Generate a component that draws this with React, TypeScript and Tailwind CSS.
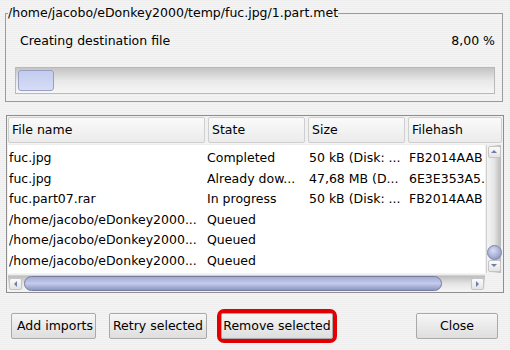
import React from 'react';

const rows = [
    { name: 'fuc.jpg', state: 'Completed', size: '50 kB (Disk: ...', hash: 'FB2014AAB' },
    { name: 'fuc.jpg', state: 'Already dow...', size: '47,68 MB (D...', hash: '6E3E353A5.' },
    { name: 'fuc.part07.rar', state: 'In progress', size: '50 kB (Disk: ...', hash: 'FB2014AAB' },
    { name: '/home/jacobo/eDonkey2000...', state: 'Queued', size: '', hash: '' },
    { name: '/home/jacobo/eDonkey2000...', state: 'Queued', size: '', hash: '' },
    { name: '/home/jacobo/eDonkey2000...', state: 'Queued', size: '', hash: '' },
];

function Arrow({ dir }: { dir: 'up' | 'down' | 'left' | 'right' }) {
    const pts = {
        up: '1,5 4,2 7,5',
        down: '1,2 4,5 7,2',
        left: '5,1 2,4 5,7',
        right: '2,1 5,4 2,7',
    }[dir];
    return (
        <div className="w-[13px] h-[12px] flex items-center justify-center border border-[#c4c4c4] rounded-[2px] bg-gradient-to-b from-[#fbfbfb] to-[#e4e4e4]">
            <svg width="8" height="8" viewBox="0 0 8 8">
                <polygon points={pts} fill="#6d7fa8" />
            </svg>
        </div>
    );
}

function Btn({ children, w, align = 'justify-center' }: { children: React.ReactNode; w: string; align?: string }) {
    return (
        <button className={`${w} ${align} h-[26px] overflow-hidden whitespace-nowrap border border-[#a9a9a9] rounded-[2px] bg-gradient-to-b from-[#f6f6f6] to-[#dedede] text-[12.5px] text-black flex items-center`}>
            {children}
        </button>
    );
}

export default function App() {
    return (
        <div className="w-[510px] h-[350px] overflow-hidden font-['DejaVu_Sans',sans-serif] text-[12.5px] text-black bg-[repeating-linear-gradient(to_bottom,#eeeeee_0px,#eeeeee_1px,#f4f4f4_1px,#f4f4f4_2px)] flex flex-col">
            {/* progress group */}
            <fieldset className="mt-[6px] ml-[5px] mr-[7px] border border-[#9c9c9c] pl-[2px] pr-[2px] pb-[7px]">
                <legend className="leading-[14px] px-0">/home/jacobo/eDonkey2000/temp/fuc.jpg/1.part.met</legend>
                <div className="pl-[7px] pr-[5px]">
                    <div className="mt-[13px] pl-[5px] flex justify-between leading-[15px]">
                        <span>Creating destination file</span>
                        <span>8,00 %</span>
                    </div>
                    <div className="mt-[19px] h-[27px] border border-[#b9b9b9] bg-gradient-to-b from-[#c4c4c4] via-[#e8e8e8] to-[#f6f6f6] p-[2px]">
                        <div className="w-[36px] h-full rounded-[3px] border border-[#98a0c4] bg-gradient-to-b from-[#c3ccef] to-[#d6dcf5]" />
                    </div>
                </div>
            </fieldset>

            {/* file list */}
            <div className="mt-[13px] ml-[6px] w-[498px] border border-[#8e8e8e] p-[1px] flex flex-col">
                <div className="flex h-[26px] gap-[3px]">
                    {[['File name', 'w-[197px]'], ['State', 'w-[97px]'], ['Size', 'w-[97px]'], ['Filehash', 'flex-1']].map(([t, w]) => (
                        <div key={t} className={`${w} border border-[#cfcfcf] rounded-[2px] bg-gradient-to-b from-[#fafafa] to-[#ebebeb] flex items-center pl-[3px] pt-[1px]`}>
                            {t}
                        </div>
                    ))}
                </div>
                <div className="mt-[2px] flex h-[128px]">
                    <div className="w-[477px] bg-white pt-[3px] overflow-hidden">
                        {rows.map((r, i) => (
                            <div key={i} className="flex h-[20.6px] items-center whitespace-nowrap">
                                <div className="w-[199px] pl-[1px] overflow-hidden">{r.name}</div>
                                <div className="w-[101px] overflow-hidden">{r.state}</div>
                                <div className="w-[100px] pl-[1px] overflow-hidden">{r.size}</div>
                                <div className="flex-1 pl-[1px] overflow-hidden">{r.hash}</div>
                            </div>
                        ))}
                    </div>
                    <div className="ml-[1px] w-[15px] flex flex-col items-center bg-gradient-to-r from-[#f4f4f4] via-[#e6e6e6] to-[#b8b8b8] border-l border-[#d0d0d0]">
                        <div className="mt-[1px]"><Arrow dir="up" /></div>
                        <div className="flex-1" />
                        <div className="w-[15px] h-[15px] rounded-full border border-[#7a82a8] bg-[radial-gradient(circle_at_40%_35%,#d8ddf4,#9aa3cc_70%,#7c84ad)]" />
                        <div className="mb-[1px]"><Arrow dir="down" /></div>
                    </div>
                </div>
                <div className="mt-[2px] flex h-[16px]">
                    <div className="w-[477px] flex items-center bg-gradient-to-b from-[#bdbdbd] via-[#e4e4e4] to-[#f4f4f4] border-t border-[#d0d0d0]">
                        <div className="ml-[1px]"><Arrow dir="left" /></div>
                        <div className="ml-[2px] w-[418px] h-[15px] rounded-full border border-[#737b9f] bg-gradient-to-b from-[#a3abd2] via-[#c4cbec] to-[#8d96c0]" />
                        <div className="flex-1" />
                        <div className="mr-[1px]"><Arrow dir="right" /></div>
                    </div>
                    <div className="ml-[1px] w-[15px]" />
                </div>
            </div>

            {/* buttons */}
            <div className="mt-[16px] flex items-center pl-[11px] pr-[12px]">
                <Btn w="w-[85px]" align="justify-start pl-[5px]">Add imports</Btn>
                <div className="ml-[13px]"><Btn w="w-[98px]">Retry selected</Btn></div>
                <div className="ml-[10px] border-[4px] border-[#e30000] rounded-[7px]">
                    <Btn w="w-[112px]">Remove selected</Btn>
                </div>
                <div className="ml-auto"><Btn w="w-[82px]">Close</Btn></div>
            </div>
        </div>
    );
}
